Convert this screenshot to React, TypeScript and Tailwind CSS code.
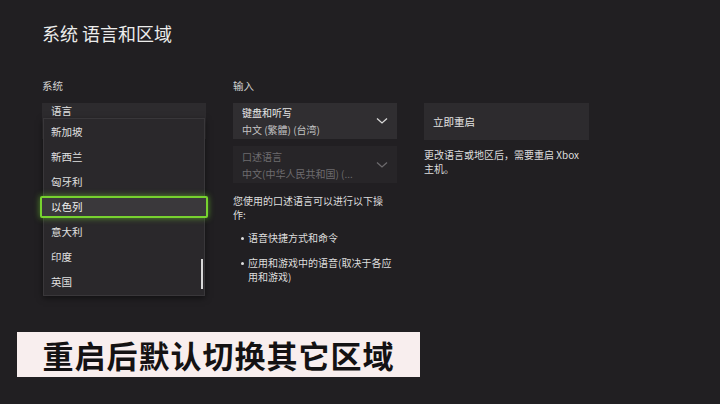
import React from "react";

const font = { fontFamily: '"Noto Sans CJK SC", "Noto Sans", sans-serif' };

function Chevron({ dim }: { dim?: boolean }) {
  return (
    <svg width="12" height="8" viewBox="0 0 12 8" className="shrink-0">
      <path d="M1 1.5 L6 6 L11 1.5" fill="none" stroke={dim ? "#6c6a6d" : "#d8d8d8"} strokeWidth="1.3" />
    </svg>
  );
}

function Bullet({ children }: { children: React.ReactNode }) {
  return (
    <div className="flex">
      <div className="w-[15px] shrink-0 h-[14px] flex items-center pl-[8px]">
        <div className="w-[3px] h-[3px] rounded-full bg-[#dedede]" />
      </div>
      <div>{children}</div>
    </div>
  );
}

const items = ["新加坡", "新西兰", "匈牙利", "以色列", "意大利", "印度", "英国"];

export default function App() {
  return (
    <div className="relative w-[720px] h-[404px] bg-[#211f22] overflow-hidden text-[#e4e4e4]" style={font}>
      <div className="pl-[42px] pt-[20px]">
        <div className="text-[18px] leading-[26px] text-[#ececec]">系统 语言和区域</div>
        <div className="flex gap-[27px] mt-[33px]">
          {/* Left column */}
          <div className="w-[164px] relative">
            <div className="text-[10.5px] leading-[14px] text-[#d4d4d4]">系统</div>
            <div className="mt-[10px] h-[36px] bg-[#2d2b2e] px-[9px] pt-[1px] text-[10.5px] leading-[14px] text-[#e2e2e2]">语言</div>
            <div className="absolute left-[1px] top-[39px] w-[162px] h-[178px] bg-[#2a282b] border border-[#39373a] shadow-[0_2px_6px_rgba(0,0,0,0.5)]">
              {items.map((it) =>
                it === "以色列" ? (
                  <div key={it} className="h-[25px] flex items-center">
                    <div className="mx-[-4px] w-[170px] h-[22px] border-2 border-[#77d22f] rounded-[2px] bg-[#3a383b] shadow-[0_0_6px_rgba(120,220,50,0.6)] flex items-center pl-[9px] text-[10.5px] text-[#f0f0f0]">
                      {it}
                    </div>
                  </div>
                ) : (
                  <div key={it} className="h-[25px] flex items-center pl-[7px] text-[10.5px] text-[#e0e0e0]">
                    {it}
                  </div>
                )
              )}
              <div className="absolute right-[1px] top-[140px] w-[2px] h-[30px] bg-[#d8d8d8]" />
            </div>
          </div>
          {/* Middle column */}
          <div className="w-[164px]">
            <div className="text-[10.5px] leading-[14px] text-[#d4d4d4]">输入</div>
            <div className="mt-[10px] h-[36px] bg-[#302e31] pl-[9px] pr-[9px] flex items-center justify-between">
              <div className="flex flex-col text-[10px] leading-[17px]">
                <span className="text-[#e6e6e6]">键盘和听写</span>
                <span className="text-[#c4c4c4]">中文 (繁體) (台湾)</span>
              </div>
              <Chevron />
            </div>
            <div className="mt-[7px] h-[37px] bg-[#272528] pl-[9px] pr-[9px] flex items-center justify-between">
              <div className="flex flex-col text-[10px] leading-[17px] text-[#6e6c6f]">
                <span>口述语言</span>
                <span>中文(中华人民共和国) (...</span>
              </div>
              <Chevron dim />
            </div>
            <div className="mt-[11px] text-[10px] leading-[14px] text-[#dedede]">
              <div className="w-[156px]">您使用的口述语言可以进行以下操作:</div>
              <div className="mt-[9px] flex flex-col gap-[11px]">
                <Bullet>语音快捷方式和命令</Bullet>
                <Bullet>应用和游戏中的语音(取决于各应用和游戏)</Bullet>
              </div>
            </div>
          </div>
          {/* Right column */}
          <div className="w-[165px] pt-[24px]">
            <div className="h-[37px] bg-[#2d2b2e] flex items-center pl-[9px] text-[10.5px] text-[#e4e4e4]">立即重启</div>
            <div className="mt-[8px] text-[10px] leading-[14px] text-[#dedede]">更改语言或地区后，需要重启 Xbox 主机。</div>
          </div>
        </div>
      </div>
      <div className="absolute left-[17px] top-[332px] w-[403px] h-[45px] bg-[#f8eeee] flex items-center justify-center text-[31px] leading-none font-bold text-[#141213] tracking-[1px]">
        重启后默认切换其它区域
      </div>
    </div>
  );
}
